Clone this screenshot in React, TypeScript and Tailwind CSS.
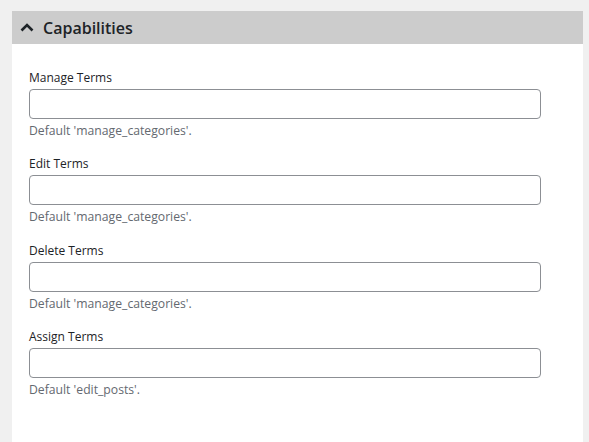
import React from "react";

const fields = [
  { label: "Manage Terms", help: "Default 'manage_categories'." },
  { label: "Edit Terms", help: "Default 'manage_categories'." },
  { label: "Delete Terms", help: "Default 'manage_categories'." },
  { label: "Assign Terms", help: "Default 'edit_posts'." },
];

export default function App() {
  return (
    <div className="min-h-[442px] h-[442px] overflow-hidden bg-[#f0f0f0] pl-[12px] pt-[11px] pr-[6px]" style={{ fontFamily: '"Open Sans", "Noto Sans", sans-serif' }}>
      <div className="w-[571px] h-[431px] bg-white flex flex-col">
        <div className="h-[33px] bg-[#cccccc] flex items-center pl-[8px] gap-[9px]">
          <svg width="14" height="9" viewBox="0 0 14 9" className="mt-[-1px]">
            <path d="M1.5 7.5 L7 2 L12.5 7.5" fill="none" stroke="#1d2327" strokeWidth="2.6" />
          </svg>
          <span className="text-[16px] font-semibold text-[#1d2327] leading-none">Capabilities</span>
        </div>
        <div className="flex flex-col px-[17px] pt-[25px] gap-[16.4px]">
          {fields.map((f) => (
            <div key={f.label} className="flex flex-col">
              <label className="text-[12px] leading-[18px] text-[#1d2327]">{f.label}</label>
              <input className="mt-[2px] w-[512px] h-[30px] border border-[#8c8f94] rounded-[4px] bg-white" />
              <p className="mt-[4px] text-[12.2px] leading-[16px] text-[#646970]">{f.help}</p>
            </div>
          ))}
        </div>
      </div>
    </div>
  );
}
